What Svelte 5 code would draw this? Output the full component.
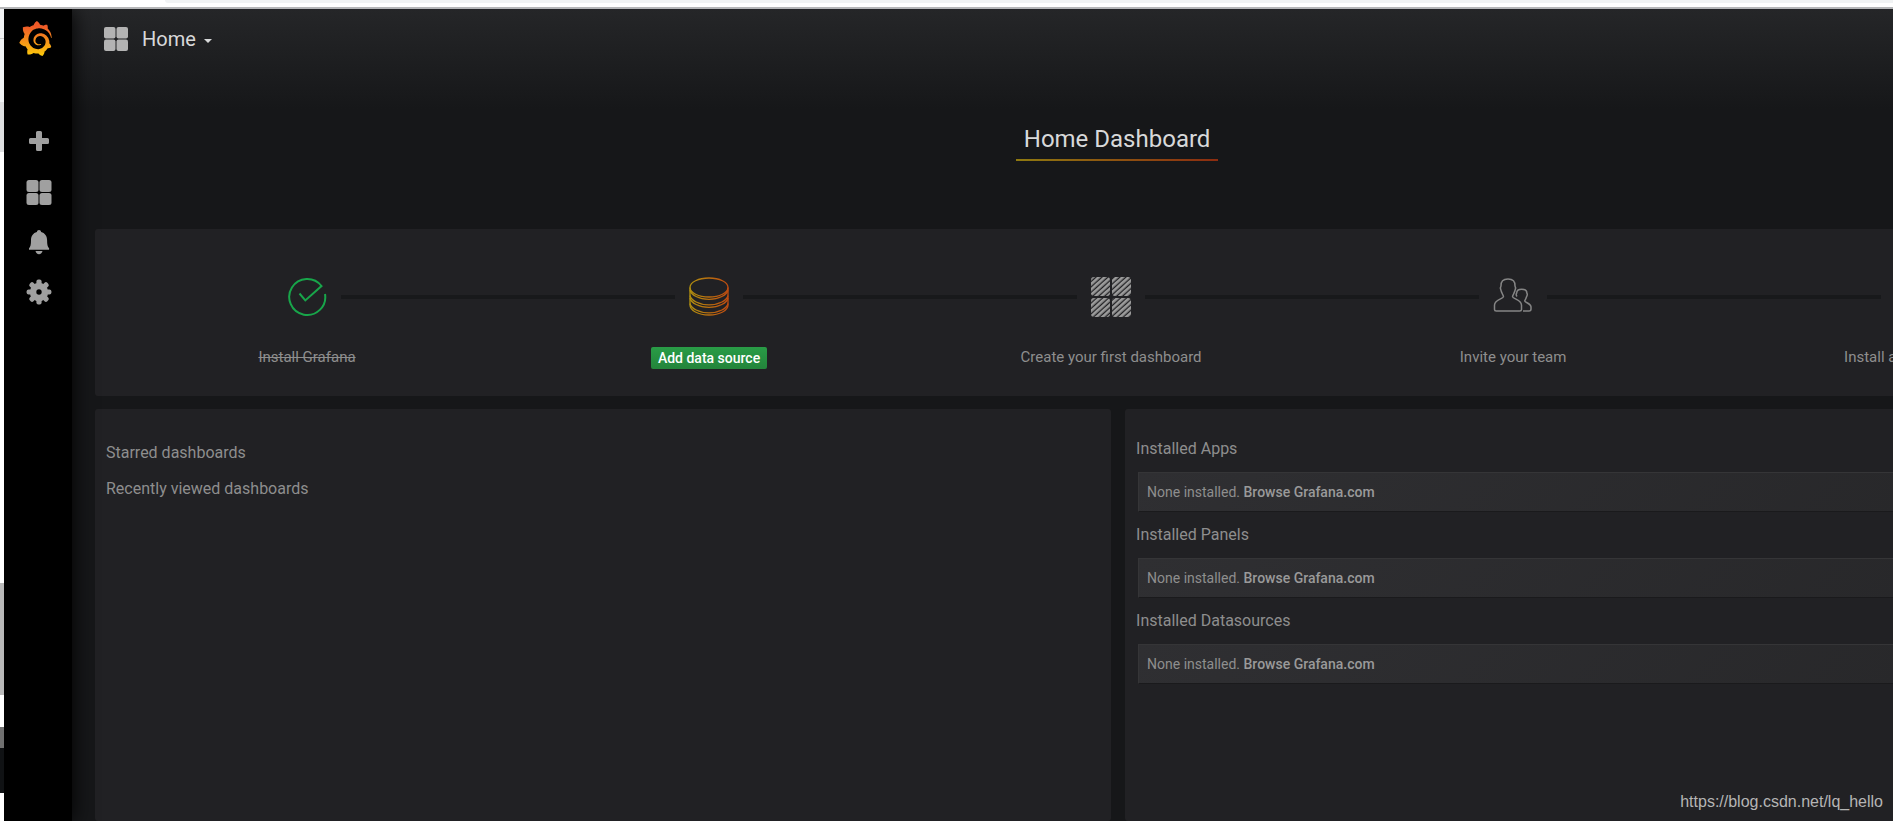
<script>
  let steps = [
    { title: "Install Grafana", icon: "check", done: true },
    { title: "Add data source", icon: "database", current: true },
    { title: "Create your first dashboard", icon: "dashboard" },
    { title: "Invite your team", icon: "users" },
    { title: "Install apps & plugins", icon: "apps" }
  ];

  let plugins = ["Installed Apps", "Installed Panels", "Installed Datasources"];

  let menu = ["Create", "Dashboards", "Alerting", "Configuration"];
</script>

<div class="screen">
  <div class="browser-top"><div class="address"></div></div>
  <div class="row">
    <div class="browser-side"></div>

    <nav class="sidemenu">
      <a class="logo" href="/" aria-label="Grafana">
        <svg width="35" height="35" viewBox="0 0 24 24">
          <defs>
            <linearGradient id="logo-fill" x1="0" y1="0" x2="0" y2="1">
              <stop offset="0.15" stop-color="#f05a28" />
              <stop offset="1" stop-color="#fbca0a" />
            </linearGradient>
          </defs>
          <path fill="url(#logo-fill)" d="M23.02 10.59a8.578 8.578 0 0 0-.862-3.034 8.911 8.911 0 0 0-1.789-2.445c.337-1.342-.413-2.505-.413-2.505-1.292-.08-2.113.4-2.416.62-.052-.02-.102-.044-.154-.064-.22-.089-.446-.172-.677-.247-.231-.073-.47-.14-.711-.197a9.867 9.867 0 0 0-.875-.161C14.557.753 12.94 0 12.94 0c-1.804 1.145-2.147 2.744-2.147 2.744l-.018.093c-.098.029-.2.057-.298.088-.138.042-.275.094-.413.143-.138.055-.275.107-.41.166a8.869 8.869 0 0 0-1.557.87l-.063-.029c-2.497-.955-4.716.195-4.716.195-.203 2.658.996 4.33 1.235 4.636a11.608 11.608 0 0 0-.607 2.635C1.636 12.677.953 15.014.953 15.014c1.926 2.214 4.171 2.351 4.171 2.351.003-.002.006-.002.006-.005.285.509.615.994.986 1.446.156.19.32.371.488.548-.704 2.009.099 3.68.099 3.68 2.144.08 3.553-.937 3.849-1.173a9.784 9.784 0 0 0 3.164.501h.08l.055-.003.107-.002.103-.005.003.002c1.01 1.44 2.788 1.646 2.788 1.646 1.264-1.332 1.337-2.653 1.337-2.94v-.058c0-.02-.003-.039-.003-.06.265-.187.52-.387.758-.6a7.875 7.875 0 0 0 1.415-1.7c1.43.083 2.437-.885 2.437-.885-.236-1.49-1.085-2.216-1.264-2.354l-.018-.013-.016-.013a.217.217 0 0 1-.031-.02c.008-.092.016-.18.02-.27.011-.162.016-.323.016-.48v-.253l-.005-.098-.008-.135a1.891 1.891 0 0 0-.01-.13c-.003-.042-.008-.083-.013-.125l-.016-.124-.018-.122a6.215 6.215 0 0 0-2.032-3.73 6.015 6.015 0 0 0-3.222-1.46 6.292 6.292 0 0 0-.85-.048l-.107.002h-.063l-.044.003-.104.008a4.777 4.777 0 0 0-3.335 1.695c-.332.4-.592.84-.768 1.297a4.594 4.594 0 0 0-.312 1.817l.003.091c.005.055.007.11.013.164a3.615 3.615 0 0 0 .698 1.82 3.53 3.53 0 0 0 1.827 1.282c.33.098.66.14.971.137.039 0 .078 0 .114-.002l.063-.003c.02 0 .041-.003.062-.003.034-.002.065-.007.099-.01.007 0 .018-.003.028-.003l.031-.005.06-.008a1.18 1.18 0 0 0 .112-.02c.036-.008.072-.013.109-.024a2.634 2.634 0 0 0 .914-.415c.028-.02.056-.041.085-.065a.248.248 0 0 0 .039-.35.244.244 0 0 0-.309-.06l-.078.042c-.09.044-.184.083-.283.116a2.476 2.476 0 0 1-.475.096c-.028.003-.054.006-.083.006l-.083.002c-.026 0-.054 0-.08-.002l-.102-.006h-.012l-.024.006c-.016-.003-.031-.003-.044-.006-.031-.002-.06-.007-.091-.01a2.59 2.59 0 0 1-.724-.213 2.557 2.557 0 0 1-.667-.438 2.52 2.52 0 0 1-.805-1.475 2.306 2.306 0 0 1-.029-.444l.006-.122v-.023l.002-.031c.003-.021.003-.04.005-.06a3.163 3.163 0 0 1 1.352-2.29 3.12 3.12 0 0 1 .937-.43 2.946 2.946 0 0 1 .776-.101h.06l.07.002.045.003h.026l.07.005a4.041 4.041 0 0 1 1.635.49 3.94 3.94 0 0 1 1.602 1.662 3.77 3.77 0 0 1 .397 1.414l.005.076.003.075c.002.026.002.05.002.075 0 .024.003.052 0 .07v.065l-.002.073-.008.174a6.195 6.195 0 0 1-.08.639 5.1 5.1 0 0 1-.267.927 5.31 5.31 0 0 1-.624 1.13 5.052 5.052 0 0 1-3.237 2.014 4.82 4.82 0 0 1-.649.066l-.039.003h-.287a6.607 6.607 0 0 1-1.716-.265 6.776 6.776 0 0 1-3.4-2.274 6.75 6.75 0 0 1-.746-1.15 6.616 6.616 0 0 1-.714-2.596l-.005-.083-.002-.02v-.056l-.003-.073v-.096l-.003-.104v-.07l.003-.163c.008-.22.026-.45.054-.678a8.707 8.707 0 0 1 .28-1.355c.128-.444.286-.872.473-1.277a7.04 7.04 0 0 1 1.456-2.1 5.925 5.925 0 0 1 .953-.763c.169-.111.343-.213.524-.306.089-.05.182-.091.273-.135.047-.02.093-.042.138-.062a7.177 7.177 0 0 1 .714-.267l.145-.045c.049-.015.098-.026.148-.041.098-.029.197-.052.296-.076.049-.013.1-.02.15-.033l.15-.032.151-.028.076-.013.075-.01.153-.024c.057-.01.114-.013.171-.023l.169-.021c.036-.003.073-.008.106-.01l.073-.008.036-.003.042-.002c.057-.003.114-.008.171-.01l.086-.006h.023l.037-.003.145-.007a7.999 7.999 0 0 1 1.708.125 7.917 7.917 0 0 1 2.048.68 8.253 8.253 0 0 1 1.672 1.09l.09.077.089.078c.06.052.114.107.171.159.057.052.112.106.166.16.052.055.107.107.159.164a8.671 8.671 0 0 1 1.41 1.978c.012.026.028.052.04.078l.04.078.075.156c.023.051.05.1.07.153l.065.15a8.848 8.848 0 0 1 .45 1.34.19.19 0 0 0 .201.142.186.186 0 0 0 .172-.184c.01-.246.002-.532-.024-.856z" />
        </svg>
      </a>
      {#each menu as item}
        <a class="item" href="/" aria-label={item}>
          <svg width="26" height="26" viewBox="0 0 26 26">
            {#if item === "Create"}
              <path d="M11.5 2h3A1.5 1.5 0 0 1 16 3.5V9h5.5A1.5 1.5 0 0 1 23 10.5v3a1.5 1.5 0 0 1-1.5 1.5H16v5.5a1.5 1.5 0 0 1-1.5 1.5h-3a1.5 1.5 0 0 1-1.5-1.500V15H4.5A1.5 1.5 0 0 1 3 13.5v-3A1.5 1.5 0 0 1 4.500 9H10V3.5A1.5 1.5 0 0 1 11.5 2z" />
            {:else if item === "Dashboards"}
              <rect x="0.5" y="1" width="12" height="12" rx="2.5" />
              <rect x="13.5" y="1" width="12" height="12" rx="2.5" />
              <rect x="0.5" y="14" width="12" height="12" rx="2.5" />
              <rect x="13.5" y="14" width="12" height="12" rx="2.5" />
            {:else if item === "Alerting"}
              <path d="M13 1c1.2 0 2 .8 2.1 1.9 3.7 1 6 4 6 8.3 0 4.3.4 6.3 2 8v1.600H3v-1.600c1.600-1.700 2-3.700 2-8 0-4.300 2.200-7.300 5.900-8.300C11 1.800 11.800 1 13 1zM9.500 22h7c-.4 1.900-1.700 3.200-3.500 3.200S9.900 23.900 9.500 22z" />
            {:else}
              {#each [0, 45, 90, 135] as angle}
                <rect x="10.4" y="0.6" width="5.2" height="24.8" rx="2" transform="rotate({angle} 13 13)" />
              {/each}
              <circle cx="13" cy="13" r="9.2" />
              <circle cx="13" cy="13" r="2.7" fill="#000" />
            {/if}
          </svg>
        </a>
      {/each}
    </nav>

    <main>
      <div class="page">
        <header>
          <svg width="24" height="24" viewBox="0 0 24 24" fill="#b3b3b3">
            <rect x="0" y="0" width="11.5" height="11.5" rx="2" />
            <rect x="12.5" y="0" width="11.5" height="11.5" rx="2" />
            <rect x="0" y="12.5" width="11.5" height="11.5" rx="2" />
            <rect x="12.5" y="12.5" width="11.5" height="11.5" rx="2" />
          </svg>
          <button class="home">Home <span class="caret"></span></button>
        </header>

        <div class="title"><h1>Home Dashboard</h1></div>

        <section class="panel steps">
          {#each steps as step}
            <div class="step">
              <div class="track">
                <svg width="40" height="40" viewBox="0 0 40 40" fill="none">
                  {#if step.icon === "check"}
                    <path d="M38 17A18 18 0 1 1 34.5 9L18.3 23.4L12.5 16.5" stroke="#18a54a" stroke-width="2" />
                  {:else if step.icon === "database"}
                    <defs>
                      <linearGradient id="db" gradientUnits="userSpaceOnUse" x1="0" y1="0" x2="40" y2="0">
                        <stop offset="0" stop-color="#b0900f" />
                        <stop offset="1" stop-color="#c04a10" />
                      </linearGradient>
                    </defs>
                    <g stroke="url(#db)" stroke-width="1.3">
                      <ellipse cx="20" cy="10.5" rx="19" ry="9.5" />
                      <path d="M1 10.5v17.500c0 5.300 8 10 19 10s19-4.700 19-10V10.500" />
                      <path d="M1 13c1 5 9 9.300 19 9.300s18-4.300 19-9.300" />
                      <path d="M1 18.500c1 5 9 9.300 19 9.300s18-4.300 19-9.300" />
                      <path d="M1 21c1 5 9 9.300 19 9.300s18-4.300 19-9.300" />
                      <path d="M1 26.500c1 5 9 9.300 19 9.300s18-4.300 19-9.300" />
                    </g>
                  {:else if step.icon === "dashboard"}
                    <defs>
                      <pattern id="stripes" width="4" height="4" patternUnits="userSpaceOnUse" patternTransform="rotate(-42)">
                        <rect width="4" height="2.7" fill="#9b9b9b" />
                      </pattern>
                    </defs>
                    <g fill="url(#stripes)">
                      <rect x="0" y="0" width="19" height="19" rx="3" />
                      <rect x="21" y="0" width="19" height="19" rx="3" />
                      <rect x="0" y="21" width="19" height="19" rx="3" />
                      <rect x="21" y="21" width="19" height="19" rx="3" />
                    </g>
                  {:else if step.icon === "users"}
                    <g stroke="#858585" stroke-width="1.5" stroke-linejoin="round">
                      <path d="M10.500 19.500C9.500 17 8.800 16 8 13.500c-1-2.500-.8-3.500 0-4.500C7.800 4.500 10 2 15 2s7.200 2.500 7 7c.8 1 1 2 0 4.500-.8 2.500-1.500 3.500-2.500 6 0 2.500 8.500 2.500 9 8.500v4.500c0 1-.8 1.500-1.800 1.500H3.300c-1 0-1.800-.5-1.800-1.500V28c.5-6 9-6 9-8.500z" />
                      <path d="M24 19.500c-.8-1-1-2.500-.3-3.500 0-2.500 1.800-3.700 5-3.700s5.200 1.200 5.200 4c.6.800.5 2-.4 3.500-.5 1.800-1 2.700-1.800 4 0 2 6 2 6.300 6V32c0 1.200-.8 2-2 2h-6" />
                    </g>
                  {:else}
                    <rect x="2" y="2" width="36" height="36" rx="4" stroke="#858585" />
                  {/if}
                </svg>
              </div>
              {#if step.current}
                <button class="cta">{step.title}</button>
              {:else}
                <a class="label" class:done={step.done} href="/">{step.title}</a>
              {/if}
            </div>
          {/each}
        </section>

        <div class="columns">
          <section class="panel dashlist">
            <h6>Starred dashboards</h6>
            <h6>Recently viewed dashboards</h6>
          </section>
          <section class="panel pluginlist">
            {#each plugins as plugin}
              <h6>{plugin}</h6>
              <div class="empty">None installed. <a href="https://grafana.com">Browse Grafana.com</a></div>
            {/each}
          </section>
        </div>
      </div>
    </main>
  </div>
  <div class="watermark">https://blog.csdn.net/lq_hello</div>
</div>

<style>
  .screen {
    position: relative;
    display: flex;
    flex-direction: column;
    height: 100vh;
    overflow: hidden;
    background: #161719;
    font-family: Roboto, sans-serif;
    color: #8e8e8e;
  }
  .browser-top {
    flex: none;
    height: 7px;
    background: #fff;
    border-bottom: 2px solid #b5b6b8;
  }
  .address {
    height: 3px;
    margin-left: 165px;
    background: #f1f3f4;
    border-bottom-left-radius: 8px;
  }
  .row {
    flex: 1;
    display: flex;
    min-height: 0;
    overflow: hidden;
  }
  .browser-side {
    flex: none;
    width: 4px;
    z-index: 2;
    background: linear-gradient(
      #f1f2f4 29px, #c9cacc 29px 30px, #f1f3f5 30px 93px, #dedfe1 93px 143px,
      #fff 143px 574px, #b9b9b9 574px 686px, #fff 686px 718px,
      #707070 718px 739px, #101214 739px 784px, #fff 784px
    );
  }
  .sidemenu {
    flex: none;
    width: 68px;
    display: flex;
    flex-direction: column;
    background: #000;
    box-shadow: 0 0 20px #000;
    z-index: 1;
  }
  .logo {
    display: flex;
    justify-content: center;
    height: 96px;
    padding: 12px 5px 0 0;
  }
  .item {
    display: flex;
    align-items: center;
    justify-content: center;
    height: 50px;
    padding-left: 2px;
    fill: #a0a0a0;
  }
  main {
    flex: 1;
    min-width: 0;
    overflow: hidden;
    display: flex;
    background: linear-gradient(#252628, #161719 100px);
  }
  /* the dashboard is wider than the window and is cut off at the right */
  .page {
    flex: none;
    width: 115%;
    box-sizing: border-box;
    padding: 0 25px 0 23px;
    display: flex;
    flex-direction: column;
  }
  header {
    display: flex;
    align-items: center;
    gap: 14px;
    height: 60px;
    padding-left: 9px;
  }
  .home {
    display: flex;
    align-items: center;
    gap: 8px;
    padding: 0;
    border: 0;
    background: none;
    font: 20px/24px Roboto, sans-serif;
    color: #d8d9da;
  }
  .caret {
    margin-top: 4px;
    border: 4px solid transparent;
    border-top-color: #d8d9da;
    border-bottom: 0;
  }
  .title {
    display: flex;
    justify-content: center;
    height: 108px;
    padding: 52px 2px 0 0;
  }
  h1 {
    height: 38px;
    margin: 0;
    padding: 0 8px;
    border-bottom: 2px solid;
    border-image: linear-gradient(to right, #8f7a10, #8c2c10) 1;
    font-size: 24px;
    font-weight: 400;
    line-height: 36px;
    color: #d8d9da;
  }
  .panel {
    background: #212124;
    border-radius: 3px;
  }
  .steps {
    display: flex;
    height: 167px;
    padding: 0 25px 0 11px;
  }
  .step {
    flex: 1;
    display: flex;
    flex-direction: column;
    align-items: center;
    padding-top: 48px;
  }
  .track {
    align-self: stretch;
    display: flex;
    align-items: center;
    gap: 14px;
    margin-bottom: 30px;
  }
  .track::before,
  .track::after {
    content: "";
    flex: 1;
    height: 4px;
    background: #18191b;
  }
  .step:first-child .track::before,
  .step:last-child .track::after {
    visibility: hidden;
  }
  .label {
    font-size: 15px;
    line-height: 20px;
    color: #8e8e8e;
    text-decoration: none;
  }
  .label.done {
    text-decoration: line-through;
  }
  .cta {
    height: 22px;
    padding: 0 7px;
    border: 0;
    border-radius: 2px;
    background: linear-gradient(#299c46, #23843b);
    font: 500 14px/22px Roboto, sans-serif;
    color: #fff;
  }
  .columns {
    flex: 1;
    display: grid;
    grid-template-columns: 1fr 1fr;
    gap: 14px;
    padding-top: 13px;
  }
  h6 {
    margin: 0;
    font-size: 16px;
    font-weight: 400;
    line-height: 24px;
  }
  .dashlist {
    display: flex;
    flex-direction: column;
    gap: 12px;
    padding: 32px 11px;
  }
  .pluginlist {
    padding: 28px 11px;
  }
  .empty {
    margin: 11px 2px;
    padding: 0 8px;
    border: 1px solid;
    border-color: #353537 #29292b #1a1a1c #353537;
    background: linear-gradient(135deg, #2f2f32, #262628);
    font-size: 14px;
    line-height: 38px;
  }
  .empty a {
    font-weight: 500;
    color: #9a9a9a;
    text-decoration: none;
  }
  .watermark {
    position: absolute;
    right: 10px;
    bottom: 8px;
    font: 16px/22px "Liberation Sans", sans-serif;
    color: #b5b5b5;
    z-index: 2;
  }
</style>
